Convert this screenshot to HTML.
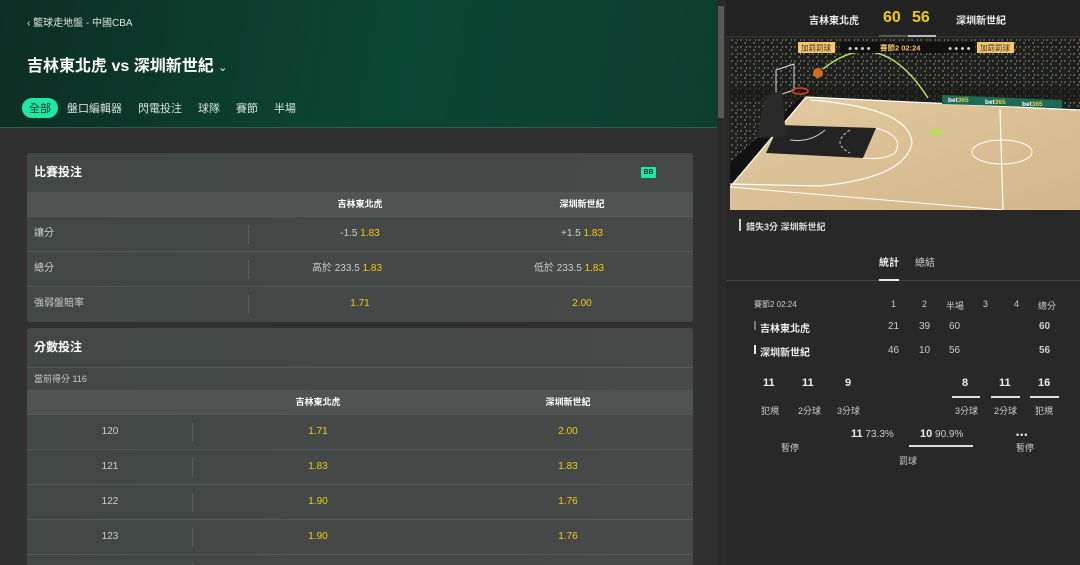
<!DOCTYPE html>
<html><head><meta charset="utf-8"><style>
*{box-sizing:border-box;margin:0;padding:0}
html,body{width:1080px;height:565px;overflow:hidden}
body{background:#2e2e2e;font-family:"Liberation Sans","Noto Sans CJK TC",sans-serif;color:#ddd;position:relative;font-size:11px}
.left{position:absolute;left:0;top:0;width:717px;height:565px;background:#303030;overflow:hidden}
.hdr{position:absolute;left:0;top:0;width:717px;height:128px;background:linear-gradient(100deg,#0d2e24 0%,#0a4733 55%,#0c3e2e 100%);border-bottom:1px solid #3a5a4e}
.crumb{position:absolute;left:27px;top:14px;font-size:10px;color:#d8e6e0}
.title{position:absolute;left:27px;top:52px;font-size:16px;font-weight:bold;color:#fff}
.tabs{position:absolute;left:22px;top:98px;font-size:11px;color:#d5e0dc;display:flex}
.tabs span{padding:2px 7px;margin-right:2px}
.tabs .on{background:#1de9a7;color:#0d2f25;border-radius:10px}
.card{position:absolute;left:27px;width:666px;background:linear-gradient(100deg,#414745,#474948);border-radius:3px;overflow:hidden}
.ch{height:39px;line-height:39px;padding-left:7px;font-size:12px;font-weight:bold;color:#fff;position:relative}
.colh{height:24px;background:#4f5453;position:relative;font-size:9px;font-weight:bold;color:#fff}
.colh span{position:absolute;top:0;line-height:24px;transform:translateX(-50%)}
.row{height:35px;border-top:1px solid #545958;position:relative;font-size:10px;color:#ccc}
.row .l{position:absolute;left:7px;top:0;line-height:34px}
.row .sep{position:absolute;top:8px;width:1px;height:19px;background:#5a5f5e}
.row .c{position:absolute;top:0;line-height:34px;transform:translateX(-50%);white-space:nowrap}
.y{color:#f2cc0c}
.scroll{position:absolute;left:717px;top:0;width:9px;height:565px;background:#2a2a2a}
.thumb{position:absolute;left:718px;top:6px;width:6px;height:112px;background:#585858}
.right{position:absolute;left:726px;top:0;width:354px;height:565px;background:#282828}
.sb{height:37px;background:#222;position:relative;border-bottom:1px solid #333}
.stat{position:absolute;font-size:10px;color:#ccc}
</style></head><body>
<div class="left">
<div class="hdr">
<div class="crumb">‹ 籃球走地盤 - 中國CBA</div>
<div class="title">吉林東北虎 vs 深圳新世紀 <span style="font-size:11px;font-weight:normal">⌄</span></div>
<div class="tabs"><span class="on">全部</span><span>盤口編輯器</span><span>閃電投注</span><span>球隊</span><span>賽節</span><span>半場</span></div>
</div>
<div class="card" style="top:153px;height:169px">
<div class="ch">比賽投注<span style="position:absolute;left:614px;top:14px;width:15px;height:11px;background:#1de9a7;color:#0d2f25;font-size:7px;line-height:11px;text-align:center;font-weight:bold;border-radius:1px">BB</span></div>
<div class="colh"><span style="left:333px">吉林東北虎</span><span style="left:555px">深圳新世紀</span></div>
<div class="row"><span class="l">讓分</span><i class="sep" style="left:221px"></i><span class="c" style="left:333px">-1.5 <span class="y">1.83</span></span><span class="c" style="left:555px">+1.5 <span class="y">1.83</span></span></div>
<div class="row"><span class="l">總分</span><i class="sep" style="left:221px"></i><span class="c" style="left:320px">高於 233.5 <span class="y">1.83</span></span><span class="c" style="left:542px">低於 233.5 <span class="y">1.83</span></span></div>
<div class="row"><span class="l">強弱盤賠率</span><i class="sep" style="left:221px"></i><span class="c y" style="left:333px">1.71</span><span class="c y" style="left:555px">2.00</span></div>
</div>
<div class="card" style="top:328px;height:260px">
<div class="ch">分數投注</div>
<div style="height:23px;line-height:23px;border-top:1px solid #545958;padding-left:7px;font-size:9px;color:#ccc">當前得分 116</div>
<div class="colh"><span style="left:291px">吉林東北虎</span><span style="left:541px">深圳新世紀</span></div>
<div class="row"><span class="c" style="left:83px">120</span><i class="sep" style="left:165px"></i><span class="c y" style="left:291px">1.71</span><span class="c y" style="left:541px">2.00</span></div>
<div class="row"><span class="c" style="left:83px">121</span><i class="sep" style="left:165px"></i><span class="c y" style="left:291px">1.83</span><span class="c y" style="left:541px">1.83</span></div>
<div class="row"><span class="c" style="left:83px">122</span><i class="sep" style="left:165px"></i><span class="c y" style="left:291px">1.90</span><span class="c y" style="left:541px">1.76</span></div>
<div class="row"><span class="c" style="left:83px">123</span><i class="sep" style="left:165px"></i><span class="c y" style="left:291px">1.90</span><span class="c y" style="left:541px">1.76</span></div>
<div class="row"><i class="sep" style="left:165px"></i></div>
</div>
</div>
<div class="scroll"></div><div class="thumb"></div>
<div class="right">
<div class="sb">
<span style="position:absolute;left:83px;top:12px;font-size:10px;font-weight:bold;color:#eee">吉林東北虎</span>
<span style="position:absolute;left:157px;top:9px;font-size:16px;font-weight:bold;color:#f2cc0c">60</span>
<span style="position:absolute;left:186px;top:9px;font-size:16px;font-weight:bold;color:#f2cc0c">56</span>
<span style="position:absolute;left:230px;top:12px;font-size:10px;font-weight:bold;color:#eee">深圳新世紀</span>
<i style="position:absolute;left:153px;top:35px;width:29px;height:2px;background:#555"></i>
<i style="position:absolute;left:182px;top:35px;width:28px;height:2px;background:#bbb"></i>
</div>
<svg style="position:absolute;left:4px;top:38px" width="350" height="172" viewBox="0 0 350 172">
<defs><pattern id="cr" width="9" height="7" patternUnits="userSpaceOnUse"><rect width="9" height="7" fill="#1c201e"/><rect x="1" y="1" width="2" height="2" fill="#6a4a3a"/><rect x="5" y="4" width="2" height="2" fill="#4e5a50"/><rect x="7" y="1" width="1" height="2" fill="#8a6a55"/></pattern>
<linearGradient id="fl" x1="0" y1="0" x2="1" y2="1"><stop offset="0" stop-color="#e2caa0"/><stop offset="1" stop-color="#d2b689"/></linearGradient></defs>
<rect width="350" height="172" fill="url(#cr)"/>
<rect y="50" width="350" height="12" fill="#1a1a18" opacity=".6"/>
<polygon points="0,149 76,59 350,72 350,172 0,172" fill="url(#fl)"/>
<polygon points="0,125 0,149 76,59 70,60" fill="#111"/>
<polygon points="49,87 146,90 133,120 36,115" fill="#232323"/>
<path d="M60 102 Q80 105 95 92" stroke="#ccc" fill="none" stroke-width="1"/>
<path d="M120 92 Q100 105 120 115" stroke="#ccc" fill="none" stroke-width="1" stroke-dasharray="3 2"/>
<path d="M0 149 L76 59 L350 72" stroke="#fff" stroke-width="1.2" fill="none"/>
<path d="M80 62 Q180 70 182 105 Q175 140 90 148 L0 146" stroke="#fff" stroke-width="1.2" fill="none"/>
<path d="M146 90 Q175 98 165 115 Q155 122 133 120" stroke="#fff" stroke-width="1" fill="none"/>
<line x1="0" y1="149" x2="273" y2="172" stroke="#fff" stroke-width="1"/>
<line x1="270" y1="71" x2="273" y2="172" stroke="#fff" stroke-width="1.2"/>
<ellipse cx="272" cy="114" rx="30" ry="12" stroke="#fff" fill="none"/>
<ellipse cx="206" cy="94" rx="6" ry="3" fill="#b8e05a"/>
<polygon points="212,57 332,62 332,70 212,66" fill="#1d6b52"/>
<text x="218" y="64" font-size="6.5" font-weight="bold" fill="#fff" font-family="Liberation Sans">bet<tspan fill="#e8d040">365</tspan></text>
<text x="255" y="66" font-size="6.5" font-weight="bold" fill="#fff" font-family="Liberation Sans">bet<tspan fill="#e8d040">365</tspan></text>
<text x="292" y="68" font-size="6.5" font-weight="bold" fill="#fff" font-family="Liberation Sans">bet<tspan fill="#e8d040">365</tspan></text>
<path d="M93 31 Q150 -15 198 60" stroke="#b8e05a" stroke-width="1.5" fill="none"/>
<circle cx="88" cy="35" r="5" fill="#d2691e"/>
<polygon points="46,32 64,26 64,52 46,58" fill="none" stroke="#ddd"/>
<ellipse cx="70" cy="53" rx="8" ry="3" fill="none" stroke="#e0401a" stroke-width="1.5"/>
<polygon points="36,58 52,52 56,98 26,100" fill="#2a2a2a"/>
<rect x="68" y="4" width="37" height="11" fill="#f5c66a"/>
<text x="71" y="12.5" font-size="7.5" fill="#333">加罰罰球</text>
<rect x="110" y="4" width="135" height="11" fill="#111"/>
<text x="118" y="12.5" font-size="7" fill="#ccc">● ● ● ●</text>
<text x="150" y="12.5" font-size="7.5" font-weight="bold" fill="#f5c66a">賽節2 02:24</text>
<text x="218" y="12.5" font-size="7" fill="#ccc">● ● ● ●</text>
<rect x="247" y="4" width="37" height="11" fill="#f5c66a"/>
<text x="250" y="12.5" font-size="7.5" fill="#333">加罰罰球</text>
</svg>
<div style="position:absolute;left:13px;top:219px;width:2px;height:12px;background:#ccc"></div>
<span style="position:absolute;left:20px;top:220px;font-size:9px;font-weight:bold;color:#ddd">錯失3分 深圳新世紀</span>
<div style="position:absolute;left:0;top:280px;width:354px;height:1px;background:#444"></div>
<span style="position:absolute;left:153px;top:254px;font-size:10px;font-weight:bold;color:#eee">統計</span>
<span style="position:absolute;left:189px;top:254px;font-size:10px;color:#ccc">總結</span>
<i style="position:absolute;left:153px;top:279px;width:20px;height:2px;background:#eee"></i>
<span class="stat" style="left:28px;top:299px;font-size:8px">賽節2 02:24</span>
<span class="stat" style="left:165px;top:299px;font-size:9px">1</span><span class="stat" style="left:196px;top:299px;font-size:9px">2</span><span class="stat" style="left:220px;top:299px;font-size:9px">半場</span><span class="stat" style="left:257px;top:299px;font-size:9px">3</span><span class="stat" style="left:288px;top:299px;font-size:9px">4</span><span class="stat" style="left:312px;top:299px;font-size:9px">總分</span>
<i style="position:absolute;left:28px;top:321px;width:2px;height:9px;background:#777"></i>
<i style="position:absolute;left:28px;top:345px;width:2px;height:9px;background:#eee"></i>
<span class="stat" style="left:34px;top:320px;font-weight:bold;color:#eee">吉林東北虎</span>
<span class="stat" style="left:34px;top:344px;font-weight:bold;color:#eee">深圳新世紀</span>
<span class="stat" style="left:162px;top:321px">21</span><span class="stat" style="left:193px;top:321px">39</span><span class="stat" style="left:223px;top:321px">60</span><span class="stat y" style="left:313px;top:321px;font-weight:bold">60</span>
<span class="stat" style="left:162px;top:345px">46</span><span class="stat" style="left:193px;top:345px">10</span><span class="stat" style="left:223px;top:345px">56</span><span class="stat y" style="left:313px;top:345px;font-weight:bold">56</span>
<span class="stat" style="left:37px;top:377px;font-size:11px;font-weight:bold;color:#eee">11</span>
<span class="stat" style="left:76px;top:377px;font-size:11px;font-weight:bold;color:#eee">11</span>
<span class="stat" style="left:119px;top:377px;font-size:11px;font-weight:bold;color:#eee">9</span>
<span class="stat" style="left:236px;top:377px;font-size:11px;font-weight:bold;color:#eee">8</span>
<span class="stat" style="left:273px;top:377px;font-size:11px;font-weight:bold;color:#eee">11</span>
<span class="stat" style="left:312px;top:377px;font-size:11px;font-weight:bold;color:#eee">16</span>
<i style="position:absolute;left:226px;top:396px;width:28px;height:2px;background:#ddd"></i>
<i style="position:absolute;left:265px;top:396px;width:29px;height:2px;background:#ddd"></i>
<i style="position:absolute;left:304px;top:396px;width:29px;height:2px;background:#ddd"></i>
<span class="stat" style="left:35px;top:404px;font-size:9px">犯規</span><span class="stat" style="left:72px;top:404px;font-size:9px">2分球</span><span class="stat" style="left:111px;top:404px;font-size:9px">3分球</span>
<span class="stat" style="left:229px;top:404px;font-size:9px">3分球</span><span class="stat" style="left:268px;top:404px;font-size:9px">2分球</span><span class="stat" style="left:309px;top:404px;font-size:9px">犯規</span>
<span class="stat" style="left:125px;top:428px"><b style="color:#eee;font-size:11px">11</b> 73.3%</span>
<span class="stat" style="left:194px;top:428px"><b style="color:#eee;font-size:11px">10</b> 90.9%</span>
<i style="position:absolute;left:183px;top:445px;width:64px;height:2px;background:#ddd"></i>
<span class="stat" style="left:55px;top:441px;font-size:9px">暫停</span>
<span class="stat" style="left:290px;top:430px;font-size:9px;color:#eee;letter-spacing:1px">•••</span>
<span class="stat" style="left:290px;top:441px;font-size:9px">暫停</span>
<span class="stat" style="left:173px;top:454px;font-size:9px">罰球</span>
</div>
</body></html>
